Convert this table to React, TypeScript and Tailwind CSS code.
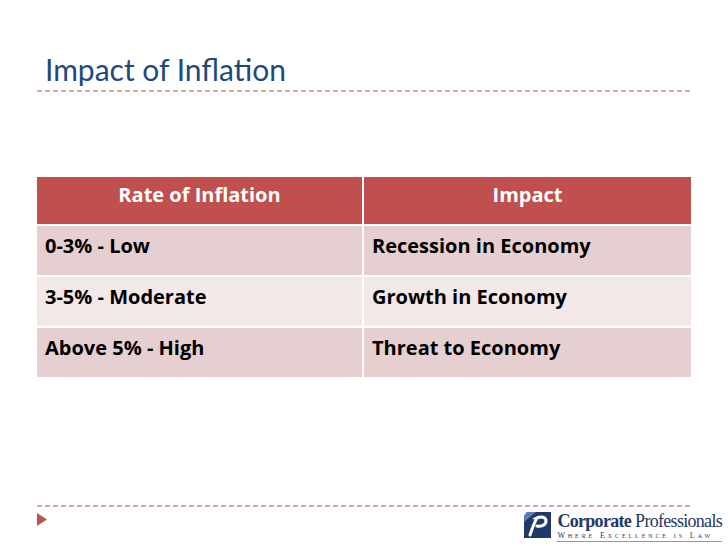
const rows = [
  { rate: "0-3% - Low", impact: "Recession in Economy", bg: "bg-[#e6cfd0]" },
  { rate: "3-5% - Moderate", impact: "Growth in Economy", bg: "bg-[#f2e8e8]" },
  { rate: "Above 5% - High", impact: "Threat to Economy", bg: "bg-[#e6cfd0]" },
];

function Dashes() {
  return (
    <div className="ml-[37px] h-[2px] w-[653px] bg-[repeating-linear-gradient(90deg,#dba6a4_0_5px,transparent_5px_8px)]" />
  );
}

function Logo() {
  return (
    <div className="flex items-start gap-[6px]">
      <svg width="27" height="26" viewBox="0 0 27 26">
        <path d="M3 0 H27 V26 H0 V4 Z" fill="#1e3a6b" />
        <path d="M3 0 H12 L0 10 V4 Z" fill="#5b7db0" />
        <path
          d="M6 23 C8 17 10 11 13 6 C17 4 22 5 22 9 C22 13 17 15 13 14"
          fill="none"
          stroke="#ffffff"
          strokeWidth="3"
          strokeLinecap="round"
        />
        <path d="M9 7 C12 5 15 5 17 6" fill="none" stroke="#ffffff" strokeWidth="1.5" />
      </svg>
      <div className="flex flex-col font-['Liberation_Serif',serif] text-[#1f3864]">
        <div className="flex items-baseline text-[18px] leading-[18px] tracking-[-0.7px]">
          <span className="font-bold">Corporate</span>
          <span className="ml-[4px]">Professionals</span>
        </div>
        <div className="mt-[2px] border-b border-[#8a97ad] pb-[1px] text-[8px] leading-[8px] tracking-[2.9px] [font-variant:small-caps]">
          Where Excellence is Law
        </div>
      </div>
    </div>
  );
}

export default function App() {
  return (
    <main className="flex h-[546px] w-[728px] flex-col overflow-hidden bg-white font-['Lato','Open_Sans',sans-serif]">
      <h1 className="ml-[45px] mt-[51px] text-[30px] leading-[36px] text-[#1f497d]">Impact of Inflation</h1>
      <div className="mt-[3px]">
        <Dashes />
      </div>

      <div className="ml-[37px] mt-[85px] grid w-[654px] grid-cols-[325px_327px] gap-[2px] font-['Open_Sans',sans-serif] text-[20px] font-bold">
        <div className="h-[47px] bg-[#c0504d] pt-[3px] text-center text-white">Rate of Inflation</div>
        <div className="h-[47px] bg-[#c0504d] pt-[3px] text-center text-white">Impact</div>
        {rows.map((r) => (
          <div key={r.rate} className="contents">
            <div className={`h-[49px] ${r.bg} pl-[8px] pt-[5px] text-black`}>{r.rate}</div>
            <div className={`h-[49px] ${r.bg} pl-[8px] pt-[5px] text-black`}>{r.impact}</div>
          </div>
        ))}
      </div>

      <div className="mt-[128px]">
        <Dashes />
      </div>
      <div className="flex items-start justify-between pl-[37px] pr-[6px]">
        <svg width="10" height="13" viewBox="0 0 10 13" className="mt-[6px]">
          <path d="M0 0 L10 6.5 L0 13 Z" fill="#c0504d" />
        </svg>
        <div className="mt-[5px]">
          <Logo />
        </div>
      </div>
    </main>
  );
}
